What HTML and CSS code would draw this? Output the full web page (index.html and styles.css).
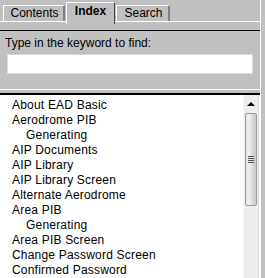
FILE: index.html
```html
<!DOCTYPE html>
<html lang="en">
<head>
    <meta charset="UTF-8">
    <title>Help Index</title>
    <link rel="stylesheet" href="styles.css">
</head>
<body>
    <div class="window">
        <div class="tabs">
            <div class="tab">Contents</div>
            <div class="tab active">Index</div>
            <div class="tab">Search</div>
        </div>
        <div class="panel">
            <label for="keyword">Type in the keyword to find:</label>
            <input type="text" id="keyword">
        </div>
        <div class="list-box">
            <ul class="topics">
                <li>About EAD Basic</li>
                <li>Aerodrome PIB</li>
                <li class="sub">Generating</li>
                <li>AIP Documents</li>
                <li>AIP Library</li>
                <li>AIP Library Screen</li>
                <li>Alternate Aerodrome</li>
                <li>Area PIB</li>
                <li class="sub">Generating</li>
                <li>Area PIB Screen</li>
                <li>Change Password Screen</li>
                <li>Confirmed Password</li>
            </ul>
            <div class="scrollbar">
                <div class="arrow-up"></div>
                <div class="thumb">
                    <span class="grip"></span>
                </div>
            </div>
        </div>
    </div>
</body>
</html>
```

FILE: styles.css
```css
body {
    margin: 0;
    background-color: #c0c0c0;
    font-family: "Liberation Sans", Arial, sans-serif;
    font-size: 12px;
    color: #000;
    overflow: hidden;
}

.window {
    width: 260px;
    height: 278px;
    border-right: 1px solid #fff;
    display: flex;
    flex-direction: column;
}

.tabs {
    height: 21px;
    border-bottom: 1px solid #fff;
    display: flex;
    align-items: flex-end;
    padding-left: 3px;
}

.tab {
    height: 15px;
    line-height: 15px;
    border-top: 1px solid #fff;
    border-left: 1px solid #fff;
    border-right: 2px solid #808080;
    text-align: center;
    width: 58px;
    margin-right: 1px;
}

.tab:first-child {
    width: 59px;
    padding-left: 2px;
    width: 57px;
}

.tab:last-child {
    width: 51px;
    padding-left: 2px;
    width: 49px;
}

.tab.active {
    position: relative;
    height: 21px;
    line-height: 17px;
    width: 47px;
    margin-bottom: -3px;
    font-weight: bold;
    background-color: #c0c0c0;
    border-right: 1px solid #404040;
}

.panel {
    margin-top: 8px;
    border-top: 1px solid #000;
    border-bottom: 1px solid #fff;
    padding: 5px 0 0 5px;
    box-sizing: border-box;
    height: 60px;
}

.panel label {
    display: block;
    line-height: 14px;
}

.panel input {
    display: block;
    margin: 4px 0 0 2px;
    width: 246px;
    height: 20px;
    box-sizing: border-box;
    border: 1px solid #dcdcdc;
    background: #fff;
    padding: 0 3px;
    font: inherit;
}

.list-box {
    margin-top: 3px;
    border-top: 2px solid #000;
    background: #fff;
    flex: 1;
    display: flex;
    overflow: hidden;
}

.topics {
    list-style: none;
    margin: 0;
    padding: 3px 0 0 12px;
    flex: 1;
}

.topics li {
    line-height: 15px;
    white-space: nowrap;
    letter-spacing: 0.2px;
}

.topics li.sub {
    padding-left: 14px;
}

.scrollbar {
    width: 14px;
    margin-right: 1px;
    background: #eeeeee;
    border-left: 1px solid #f6f6f6;
    border-right: 1px solid #dadada;
    display: flex;
    flex-direction: column;
    align-items: center;
}

.arrow-up {
    margin-top: 7px;
    width: 0;
    height: 0;
    border-left: 4px solid transparent;
    border-right: 4px solid transparent;
    border-bottom: 4px solid #000;
}

.thumb {
    margin-top: 7px;
    width: 12px;
    height: 93px;
    box-sizing: border-box;
    border: 1px solid #9a9a9a;
    border-radius: 2px;
    background: linear-gradient(to right, #e4e4e4 0%, #f0f0f0 30%, #d6d6d6 70%, #c8c8c8 100%);
    display: flex;
    align-items: center;
    justify-content: center;
}

.grip {
    width: 6px;
    height: 7px;
    background: repeating-linear-gradient(to bottom, #555 0, #555 1px, transparent 1px, transparent 2px);
}
```
